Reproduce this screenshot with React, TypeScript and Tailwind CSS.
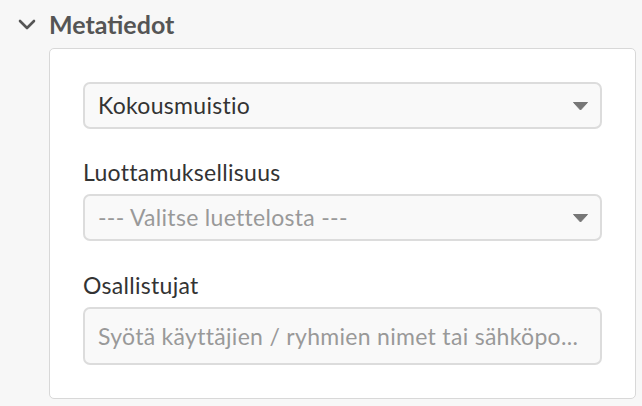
export default function App() {

return (

<div className="w-[642px] h-[406px] bg-[#f7f7f7] overflow-hidden tracking-[0.3px]" style={{ fontFamily: '"Lato", "Open Sans", sans-serif' }}>

<div className="flex items-center h-[46px] pl-[18px] pt-[2px]">
<svg width="18" height="11" viewBox="0 0 18 11" className="shrink-0">
<path d="M2 2 L9 9 L16 2" fill="none" stroke="#555" strokeWidth="2.6" strokeLinecap="round" strokeLinejoin="round" />
</svg>
<h1 className="ml-[13px] text-[25px] font-bold text-[#555] leading-none tracking-normal">
Metatiedot
</h1>
</div>

<div className="ml-[49px] mt-[2px] w-[587px] bg-white border border-[#d8d8d8] rounded-[5px] px-[33px] pt-[33px] pb-[33px]">

<div className="h-[47px] flex items-center justify-between bg-[#f9f9f9] border-2 border-[#dcdcdc] rounded-[7px] pl-[13px] pr-[12px]">
<span className="text-[23px] text-[#333]">Kokousmuistio</span>
<svg width="15" height="8" viewBox="0 0 15 8">
<path d="M0.5 0.5 H14.5 L7.5 8 Z" fill="#777" stroke="#777" strokeWidth="1" strokeLinejoin="round" />
</svg>
</div>

<label className="block mt-[31px] mb-[10px] text-[23px] leading-[24px] text-[#333]">
Luottamuksellisuus
</label>
<div className="h-[47px] flex items-center justify-between bg-[#f9f9f9] border-2 border-[#dcdcdc] rounded-[7px] pl-[13px] pr-[12px]">
<span className="text-[23px] text-[#999]">--- Valitse luettelosta ---</span>
<svg width="15" height="8" viewBox="0 0 15 8">
<path d="M0.5 0.5 H14.5 L7.5 8 Z" fill="#777" stroke="#777" strokeWidth="1" strokeLinejoin="round" />
</svg>
</div>

<label className="block mt-[32px] mb-[10px] text-[23px] leading-[24px] text-[#333]">
Osallistujat
</label>
<div className="h-[58px] flex items-center bg-[#f9f9f9] border-2 border-[#dcdcdc] rounded-[7px] px-[13px]">
<span className="text-[23px] text-[#999] whitespace-nowrap">Syötä käyttäjien / ryhmien nimet tai sähköpo...</span>
</div>

</div>

</div>

)

}
